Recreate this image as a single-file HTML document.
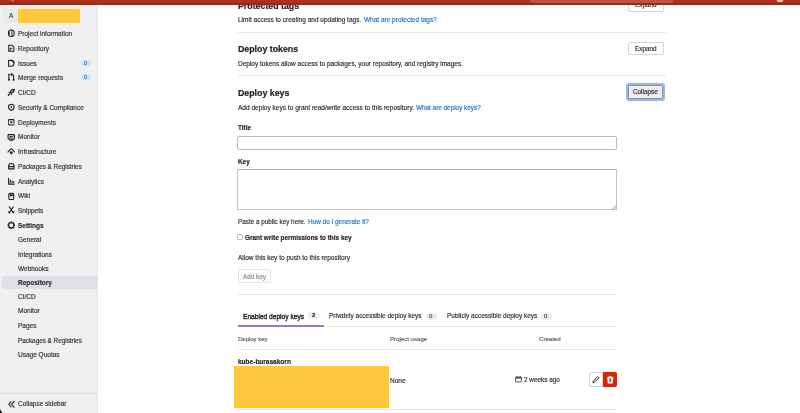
<!DOCTYPE html>
<html><head><meta charset="utf-8"><style>
html,body{margin:0;padding:0;}
body{width:800px;height:413px;overflow:hidden;position:relative;background:#fff;font-family:"Liberation Sans",sans-serif;}
.t{position:absolute;white-space:pre;line-height:1;will-change:transform;}
.r{position:absolute;}
</style></head><body>
<div class="t" style="left:238.00px;top:2.05px;font-size:8.8px;font-weight:700;color:#1f1e24;-webkit-text-stroke:0.2px currentColor;">Protected tags</div>
<div class="t" style="left:238.00px;top:17.20px;font-size:6.5px;font-weight:400;color:#2b2a30;-webkit-text-stroke:0.15px currentColor;">Limit access to creating and updating tags.</div>
<div class="t" style="left:364.00px;top:17.21px;font-size:6.49px;font-weight:400;color:#1f6fc5;-webkit-text-stroke:0.15px currentColor;">What are protected tags?</div>
<div class="r" style="left:627.50px;top:-1.80px;width:36.00px;height:13.40px;border:1px solid #d4d4d4;border-radius:2px;background:#fff;box-sizing:border-box"></div>
<div class="t" style="left:634.80px;top:2.22px;font-size:6.35px;font-weight:400;color:#2b2a30;-webkit-text-stroke:0.15px currentColor;">Expand</div>
<div class="r" style="left:238.00px;top:32.00px;width:428.00px;height:1.00px;background:#e9e9e9"></div>
<div class="t" style="left:238.00px;top:45.05px;font-size:8.8px;font-weight:700;color:#1f1e24;-webkit-text-stroke:0.2px currentColor;">Deploy tokens</div>
<div class="t" style="left:238.00px;top:61.00px;font-size:6.5px;font-weight:400;color:#2b2a30;-webkit-text-stroke:0.15px currentColor;">Deploy tokens allow access to packages, your repository, and registry images.</div>
<div class="r" style="left:628.00px;top:42.00px;width:36.00px;height:13.00px;border:1px solid #d4d4d4;border-radius:2px;background:#fff;box-sizing:border-box"></div>
<div class="t" style="left:634.80px;top:46.12px;font-size:6.35px;font-weight:400;color:#2b2a30;-webkit-text-stroke:0.15px currentColor;">Expand</div>
<div class="r" style="left:238.00px;top:75.00px;width:428.00px;height:1.00px;background:#e9e9e9"></div>
<div class="t" style="left:238.00px;top:88.65px;font-size:8.8px;font-weight:700;color:#1f1e24;-webkit-text-stroke:0.2px currentColor;">Deploy keys</div>
<div class="t" style="left:238.00px;top:104.56px;font-size:6.55px;font-weight:400;color:#2b2a30;-webkit-text-stroke:0.15px currentColor;">Add deploy keys to grant read/write access to this repository.</div>
<div class="t" style="left:416.20px;top:104.71px;font-size:6.37px;font-weight:400;color:#1f6fc5;-webkit-text-stroke:0.15px currentColor;">What are deploy keys?</div>
<div class="r" style="left:626.20px;top:83.00px;width:38.80px;height:17.60px;border-radius:3px;background:#93bdf2"></div>
<div class="r" style="left:628.10px;top:85.00px;width:35.00px;height:13.75px;background:#ececec;border:1px solid #8b8680;box-shadow:inset 0 0 0 1px #fafafa;border-radius:1.5px;box-sizing:border-box"></div>
<div class="t" style="left:633.10px;top:89.32px;font-size:6.35px;font-weight:400;color:#2b2a30;-webkit-text-stroke:0.15px currentColor;">Collapse</div>
<div class="t" style="left:238.00px;top:125.18px;font-size:6.4px;font-weight:700;color:#1f1e24;-webkit-text-stroke:0.16px currentColor;">Title</div>
<div class="r" style="left:237.30px;top:135.90px;width:379.70px;height:13.80px;border:1.1px solid #bdbdbd;border-radius:2px;background:#fff;box-sizing:border-box"></div>
<div class="t" style="left:238.00px;top:158.78px;font-size:6.4px;font-weight:700;color:#1f1e24;-webkit-text-stroke:0.16px currentColor;">Key</div>
<div class="r" style="left:237.20px;top:169.20px;width:379.80px;height:40.80px;border:1.2px solid #c4c4c4;border-top-color:#b4b4b4;border-radius:1px;background:#fff;box-sizing:border-box"></div>
<svg class="r" style="left:611px;top:204px" width="6" height="6" viewBox="0 0 6 6"><path d="M1 5.2 L5.2 1 M3 5.2 L5.2 3" stroke="#777" stroke-width="0.6"/></svg>
<div class="t" style="left:238.00px;top:219.44px;font-size:6.33px;font-weight:400;color:#2b2a30;-webkit-text-stroke:0.15px currentColor;">Paste a public key here.</div>
<div class="t" style="left:308.10px;top:219.37px;font-size:6.41px;font-weight:400;color:#1f6fc5;-webkit-text-stroke:0.15px currentColor;">How do I generate it?</div>
<div class="r" style="left:237.30px;top:234.30px;width:6.00px;height:6.00px;border:1px solid #b5b5b5;border-radius:1.2px;background:#fff;box-sizing:border-box"></div>
<div class="t" style="left:245.10px;top:235.28px;font-size:6.4px;font-weight:700;color:#1f1e24;-webkit-text-stroke:0.16px currentColor;">Grant write permissions to this key</div>
<div class="t" style="left:238.00px;top:254.80px;font-size:6.5px;font-weight:400;color:#2b2a30;-webkit-text-stroke:0.15px currentColor;">Allow this key to push to this repository</div>
<div class="r" style="left:238.00px;top:269.40px;width:33.20px;height:14.00px;border:1px solid #e6e6e6;border-radius:2px;background:#fafafa;box-sizing:border-box"></div>
<div class="t" style="left:243.00px;top:273.62px;font-size:6.35px;font-weight:400;color:#8c8c8c;-webkit-text-stroke:0.15px currentColor;">Add key</div>
<div class="r" style="left:238.00px;top:294.00px;width:379.00px;height:1.00px;background:#e9e9e9"></div>
<div class="t" style="left:243.20px;top:313.60px;font-size:6.61px;font-weight:400;color:#2b2a30;-webkit-text-stroke:0.15px currentColor;-webkit-text-stroke:0.38px currentColor">Enabled deploy keys</div>
<div class="r" style="left:308.00px;top:312.30px;width:11.20px;height:7.00px;background:#ececec;border-radius:3.5px"></div>
<div class="t" style="left:311.70px;top:313.21px;font-size:5.9px;font-weight:700;color:#222;-webkit-text-stroke:0.16px currentColor;">2</div>
<div class="t" style="left:329.40px;top:313.23px;font-size:6.46px;font-weight:400;color:#2b2a30;-webkit-text-stroke:0.15px currentColor;">Privately accessible deploy keys</div>
<div class="r" style="left:426.20px;top:312.50px;width:10.80px;height:7.00px;background:#ececec;border-radius:3.5px"></div>
<div class="t" style="left:429.10px;top:313.12px;font-size:6.0px;font-weight:400;color:#444;-webkit-text-stroke:0.15px currentColor;">0</div>
<div class="t" style="left:447.10px;top:313.22px;font-size:6.47px;font-weight:400;color:#2b2a30;-webkit-text-stroke:0.15px currentColor;">Publicly accessible deploy keys</div>
<div class="r" style="left:541.20px;top:312.50px;width:10.80px;height:7.00px;background:#ececec;border-radius:3.5px"></div>
<div class="t" style="left:544.10px;top:313.12px;font-size:6.0px;font-weight:400;color:#444;-webkit-text-stroke:0.15px currentColor;">0</div>
<div class="r" style="left:238.00px;top:326.00px;width:379.00px;height:1.00px;background:#e9e9e9"></div>
<div class="r" style="left:238.00px;top:324.90px;width:86.00px;height:2.10px;background:#8080cf"></div>
<div class="t" style="left:238.00px;top:336.04px;font-size:6.1px;font-weight:400;color:#5f5e64;-webkit-text-stroke:0.15px currentColor;letter-spacing:-0.07px">Deploy key</div>
<div class="t" style="left:389.60px;top:335.95px;font-size:6.2px;font-weight:400;color:#5f5e64;-webkit-text-stroke:0.15px currentColor;letter-spacing:-0.05px">Project usage</div>
<div class="t" style="left:538.60px;top:335.95px;font-size:6.2px;font-weight:400;color:#5f5e64;-webkit-text-stroke:0.15px currentColor;letter-spacing:-0.06px">Created</div>
<div class="r" style="left:238.00px;top:349.00px;width:379.00px;height:1.00px;background:#e9e9e9"></div>
<div class="t" style="left:238.00px;top:358.97px;font-size:6.53px;font-weight:700;color:#1f1e24;-webkit-text-stroke:0.16px currentColor;">kube-burasakorn</div>
<div class="r" style="left:233.50px;top:365.50px;width:155.30px;height:42.30px;background:#fec83e;border:0.8px solid #fcd20c;box-sizing:border-box"></div>
<div class="t" style="left:389.60px;top:378.10px;font-size:6.5px;font-weight:400;color:#2b2a30;-webkit-text-stroke:0.15px currentColor;">None</div>
<svg class="r" style="left:515.3px;top:376.2px" width="7" height="6.5" viewBox="0 0 7 6.5"><rect x="0.55" y="1.05" width="5.9" height="4.9" rx="0.7" fill="none" stroke="#4a4950" stroke-width="0.95"/><rect x="0.55" y="1.05" width="5.9" height="1.5" fill="#4a4950"/><line x1="1.9" y1="0" x2="1.9" y2="1.4" stroke="#4a4950" stroke-width="0.9"/><line x1="5.1" y1="0" x2="5.1" y2="1.4" stroke="#4a4950" stroke-width="0.9"/></svg>
<div class="t" style="left:524.40px;top:377.20px;font-size:6.38px;font-weight:400;color:#2b2a30;-webkit-text-stroke:0.15px currentColor;">2 weeks ago</div>
<div class="r" style="left:589.30px;top:372.00px;width:14.20px;height:14.60px;border:1px solid #d6d6d6;border-radius:2px 0 0 2px;background:#fff;box-sizing:border-box"></div>
<div class="r" style="left:602.80px;top:372.00px;width:14.20px;height:14.60px;background:#dd2306;border-radius:0 2px 2px 0"></div>
<svg class="r" style="left:592.2px;top:376.2px" width="7.5" height="7.5" viewBox="0 0 7.5 7.5"><path d="M0.9 6.6 L1.2 5.1 L5.3 1 Q5.9 0.5 6.5 1.1 Q7 1.7 6.5 2.3 L2.4 6.3 Z" fill="none" stroke="#2b2a30" stroke-width="1"/></svg>
<svg class="r" style="left:605.8px;top:375px" width="8.5" height="9.5" viewBox="0 0 8.5 9.5"><path d="M4.25 0.8 L7.4 2.6 L6.6 8.6 H1.9 L1.1 2.6 Z" fill="#fff"/><rect x="3.4" y="3.6" width="1.7" height="3.3" fill="#dd2306"/></svg>
<div class="r" style="left:238.00px;top:409.00px;width:379.00px;height:1.00px;background:#e9e9e9"></div>
<div class="r" style="left:0.00px;top:5.00px;width:98.00px;height:408.00px;background:#f0f0f0;border-right:1px solid #e6e6e6;box-sizing:border-box;border-top:0.8px solid #fff"></div>
<div class="r" style="left:0.00px;top:5.80px;width:97.00px;height:20.20px;background:#eeeff3"></div>
<div class="r" style="left:3.50px;top:8.90px;width:13.60px;height:13.60px;background:#e8eee9;border-radius:1.5px;border:0.5px solid #dfe5e1;box-sizing:border-box"></div>
<div class="t" style="left:8.50px;top:13.21px;font-size:6.6px;font-weight:400;color:#2a2a2a;-webkit-text-stroke:0.15px currentColor;-webkit-text-stroke:0.05px currentColor">A</div>
<div class="r" style="left:18.40px;top:8.80px;width:61.60px;height:14.00px;background:#fec83e;border:0.8px solid #fcd20c;box-sizing:border-box"></div>
<div class="t" style="left:17.80px;top:31.00px;font-size:6.5px;font-weight:400;color:#2e2d33;-webkit-text-stroke:0.15px currentColor;">Project information</div>
<div class="t" style="left:17.80px;top:46.10px;font-size:6.5px;font-weight:400;color:#2e2d33;-webkit-text-stroke:0.15px currentColor;">Repository</div>
<div class="t" style="left:17.80px;top:60.60px;font-size:6.5px;font-weight:400;color:#2e2d33;-webkit-text-stroke:0.15px currentColor;">Issues</div>
<div class="t" style="left:17.80px;top:75.20px;font-size:6.5px;font-weight:400;color:#2e2d33;-webkit-text-stroke:0.15px currentColor;">Merge requests</div>
<div class="t" style="left:17.80px;top:90.10px;font-size:6.5px;font-weight:400;color:#2e2d33;-webkit-text-stroke:0.15px currentColor;">CI/CD</div>
<div class="t" style="left:17.80px;top:105.00px;font-size:6.5px;font-weight:400;color:#2e2d33;-webkit-text-stroke:0.15px currentColor;">Security &amp; Compliance</div>
<div class="t" style="left:17.80px;top:119.60px;font-size:6.5px;font-weight:400;color:#2e2d33;-webkit-text-stroke:0.15px currentColor;">Deployments</div>
<div class="t" style="left:17.80px;top:134.30px;font-size:6.5px;font-weight:400;color:#2e2d33;-webkit-text-stroke:0.15px currentColor;">Monitor</div>
<div class="t" style="left:17.80px;top:149.20px;font-size:6.5px;font-weight:400;color:#2e2d33;-webkit-text-stroke:0.15px currentColor;">Infrastructure</div>
<div class="t" style="left:17.80px;top:164.22px;font-size:6.35px;font-weight:400;color:#2e2d33;-webkit-text-stroke:0.15px currentColor;">Packages &amp; Registries</div>
<div class="t" style="left:17.80px;top:178.70px;font-size:6.5px;font-weight:400;color:#2e2d33;-webkit-text-stroke:0.15px currentColor;">Analytics</div>
<div class="t" style="left:17.80px;top:193.40px;font-size:6.5px;font-weight:400;color:#2e2d33;-webkit-text-stroke:0.15px currentColor;">Wiki</div>
<div class="t" style="left:17.80px;top:208.10px;font-size:6.5px;font-weight:400;color:#2e2d33;-webkit-text-stroke:0.15px currentColor;">Snippets</div>
<div class="t" style="left:17.80px;top:222.90px;font-size:6.5px;font-weight:700;color:#2e2d33;-webkit-text-stroke:0.16px currentColor;">Settings</div>
<div class="r" style="left:80.50px;top:60.10px;width:10.60px;height:5.80px;background:#cbe2f9;border-radius:3px"></div>
<div class="t" style="left:84.30px;top:61.13px;font-size:5.4px;font-weight:400;color:#1f6fc5;-webkit-text-stroke:0.15px currentColor;">0</div>
<div class="r" style="left:80.50px;top:74.30px;width:10.60px;height:6.00px;background:#cbe2f9;border-radius:3px"></div>
<div class="t" style="left:84.30px;top:75.43px;font-size:5.4px;font-weight:400;color:#1f6fc5;-webkit-text-stroke:0.15px currentColor;">0</div>
<div class="r" style="left:2.00px;top:275.80px;width:94.50px;height:13.50px;background:#dfdfe5;border-radius:2px"></div>
<div class="t" style="left:17.80px;top:237.20px;font-size:6.5px;font-weight:400;color:#2e2d33;-webkit-text-stroke:0.15px currentColor;">General</div>
<div class="t" style="left:17.80px;top:251.60px;font-size:6.5px;font-weight:400;color:#2e2d33;-webkit-text-stroke:0.15px currentColor;">Integrations</div>
<div class="t" style="left:17.80px;top:265.70px;font-size:6.5px;font-weight:400;color:#2e2d33;-webkit-text-stroke:0.15px currentColor;">Webhooks</div>
<div class="t" style="left:17.80px;top:280.10px;font-size:6.5px;font-weight:700;color:#2e2d33;-webkit-text-stroke:0.16px currentColor;">Repository</div>
<div class="t" style="left:17.80px;top:294.20px;font-size:6.5px;font-weight:400;color:#2e2d33;-webkit-text-stroke:0.15px currentColor;">CI/CD</div>
<div class="t" style="left:17.80px;top:308.40px;font-size:6.5px;font-weight:400;color:#2e2d33;-webkit-text-stroke:0.15px currentColor;">Monitor</div>
<div class="t" style="left:17.80px;top:323.10px;font-size:6.5px;font-weight:400;color:#2e2d33;-webkit-text-stroke:0.15px currentColor;">Pages</div>
<div class="t" style="left:17.80px;top:337.62px;font-size:6.35px;font-weight:400;color:#2e2d33;-webkit-text-stroke:0.15px currentColor;">Packages &amp; Registries</div>
<div class="t" style="left:17.80px;top:352.00px;font-size:6.5px;font-weight:400;color:#2e2d33;-webkit-text-stroke:0.15px currentColor;">Usage Quotas</div>
<div class="r" style="left:0.00px;top:393.00px;width:98.00px;height:1.00px;background:#dcdcde"></div>
<div class="t" style="left:18.00px;top:401.10px;font-size:6.5px;font-weight:400;color:#2e2d33;-webkit-text-stroke:0.15px currentColor;">Collapse sidebar</div>
<svg class="r" style="left:6.70px;top:29.40px" width="8.6" height="8.6" viewBox="0 0 16 16"><path d="M5.6 2 H10.4 L13.2 4.6 V11.4 L10.4 14 H5.6 L2.8 11.4 V4.6 Z" stroke="#1f1e24" stroke-width="2" fill="none" stroke-linejoin="miter"/><path d="M9.2 2.4 V13.6" stroke="#1f1e24" stroke-width="1.8"/><path d="M3.6 4.8 V11.2" stroke="#1f1e24" stroke-width="2.6"/></svg>
<svg class="r" style="left:6.70px;top:44.30px" width="8.6" height="8.6" viewBox="0 0 16 16"><path d="M3.2 2.4 H9.6 L12.8 5.6 V13.6 H3.2 Z" stroke="#1f1e24" stroke-width="2.0" fill="none" stroke-linejoin="round" stroke-linecap="round"/><path d="M6.2 11 V8 H9.2" stroke="#1f1e24" stroke-width="2.0" fill="none" stroke-linejoin="round" stroke-linecap="round"/></svg>
<svg class="r" style="left:6.70px;top:58.50px" width="8.6" height="8.6" viewBox="0 0 16 16"><path d="M3 2.6 H8.2 Q13 2.6 13 8 Q13 13.4 8.2 13.4 H3 Z" stroke="#1f1e24" stroke-width="2.0" fill="none" stroke-linejoin="round" stroke-linecap="round"/><path d="M9.8 4.4 L13 6.4" stroke="#1f1e24" stroke-width="2.0" fill="none" stroke-linejoin="round" stroke-linecap="round"/></svg>
<svg class="r" style="left:6.70px;top:73.40px" width="8.6" height="8.6" viewBox="0 0 16 16"><path d="M3.6 3 V12.4" stroke="#1f1e24" stroke-width="2.0" fill="none" stroke-linejoin="round" stroke-linecap="round"/><circle cx="3.6" cy="12.6" r="1.9" fill="#1f1e24"/><circle cx="3.6" cy="2.8" r="1.6" fill="#1f1e24"/><path d="M8 2.9 H9.6 Q12.3 2.9 12.3 5.6 V12.4" stroke="#1f1e24" stroke-width="2.0" fill="none" stroke-linejoin="round" stroke-linecap="round"/><path d="M9.2 0.9 L7.2 2.9 L9.2 4.9" stroke="#1f1e24" stroke-width="2.0" fill="none" stroke-linejoin="round" stroke-linecap="round"/><circle cx="12.3" cy="12.6" r="1.9" fill="#1f1e24"/></svg>
<svg class="r" style="left:6.70px;top:88.30px" width="8.6" height="8.6" viewBox="0 0 16 16"><path d="M13.6 2.4 C10.4 2.4 7.2 4.6 6.2 7.8 L8.2 9.8 C11.4 8.8 13.6 5.6 13.6 2.4 Z" stroke="#1f1e24" stroke-width="2.0" fill="none" stroke-linejoin="round" stroke-linecap="round"/><circle cx="10.4" cy="5.6" r="0.9" fill="#1f1e24"/><path d="M6.2 7.8 L3.6 8 M8.2 9.8 L8 12.4" stroke="#1f1e24" stroke-width="2.0" fill="none" stroke-linejoin="round" stroke-linecap="round"/><path d="M4.8 11.2 L2.6 13.4" stroke="#1f1e24" stroke-width="2.4" stroke-linecap="round"/></svg>
<svg class="r" style="left:6.70px;top:103.20px" width="8.6" height="8.6" viewBox="0 0 16 16"><path d="M8 2.4 L13 4 V7.8 C13 10.8 10.8 12.8 8 13.8 C5.2 12.8 3 10.8 3 7.8 V4 Z" stroke="#1f1e24" stroke-width="2.0" fill="none" stroke-linejoin="round" stroke-linecap="round"/><circle cx="8" cy="6.8" r="1.4" fill="#1f1e24"/><path d="M8 6.8 V9.4" stroke="#1f1e24" stroke-width="1.8"/></svg>
<svg class="r" style="left:6.70px;top:117.80px" width="8.6" height="8.6" viewBox="0 0 16 16"><path d="M3 7 V4 Q3 3 4 3 H12 Q13 3 13 4 V9.5 M13 12 Q13 13 12 13 H4 Q3 13 3 12 V9.5" stroke="#1f1e24" stroke-width="2.0" fill="none" stroke-linejoin="round" stroke-linecap="round"/><rect x="6.2" y="6.2" width="3.6" height="3.6" fill="#1f1e24"/></svg>
<svg class="r" style="left:6.70px;top:132.50px" width="8.6" height="8.6" viewBox="0 0 16 16"><rect x="2" y="3" width="12" height="8.4" rx="1.6" stroke="#1f1e24" stroke-width="2.0" fill="none" stroke-linejoin="round" stroke-linecap="round"/><path d="M5.2 13.4 H10.8" stroke="#1f1e24" stroke-width="2.0" fill="none" stroke-linejoin="round" stroke-linecap="round"/><path d="M4.8 8 L6.6 6.4 L9 8 L11.2 6" stroke="#1f1e24" stroke-width="2.0" fill="none" stroke-linejoin="round" stroke-linecap="round"/></svg>
<svg class="r" style="left:6.70px;top:147.10px" width="8.6" height="8.6" viewBox="0 0 16 16"><path d="M1.8 9.4 L6.6 4 Q8 2.6 9.4 4 L14.2 9.4" stroke="#1f1e24" stroke-width="2.0" fill="none" stroke-linejoin="round" stroke-linecap="round"/><circle cx="8" cy="10.8" r="2.7" fill="#1f1e24"/></svg>
<svg class="r" style="left:6.70px;top:162.30px" width="8.6" height="8.6" viewBox="0 0 16 16"><path d="M3 13 V7.6 Q3 2.8 8 2.8 Q13 2.8 13 7.6 V13 Z" stroke="#1f1e24" stroke-width="2.0" fill="none" stroke-linejoin="round" stroke-linecap="round"/><path d="M3.2 8.4 H12.8" stroke="#1f1e24" stroke-width="2.0" fill="none" stroke-linejoin="round" stroke-linecap="round"/><path d="M3.6 11.6 H12.4" stroke="#1f1e24" stroke-width="1.4"/></svg>
<svg class="r" style="left:6.70px;top:176.90px" width="8.6" height="8.6" viewBox="0 0 16 16"><path d="M3 2.2 V13.2 H13.6" stroke="#1f1e24" stroke-width="2.0" fill="none" stroke-linejoin="round" stroke-linecap="round"/><path d="M6.2 10.4 V5.6 M9.4 10.4 V7.4 M12.4 10.4 V8.6" stroke="#1f1e24" stroke-width="2.0" fill="none" stroke-linejoin="round" stroke-linecap="round"/></svg>
<svg class="r" style="left:6.70px;top:191.60px" width="8.6" height="8.6" viewBox="0 0 16 16"><rect x="3.4" y="2.4" width="9.2" height="11.4" rx="1.8" stroke="#1f1e24" stroke-width="2.0" fill="none" stroke-linejoin="round" stroke-linecap="round"/><path d="M6.2 3 V7.2 L8 5.8 L9.8 7.2 V3" stroke="#1f1e24" stroke-width="2.0" fill="none" stroke-linejoin="round" stroke-linecap="round"/></svg>
<svg class="r" style="left:6.70px;top:206.30px" width="8.6" height="8.6" viewBox="0 0 16 16"><path d="M4.2 1.6 L10.6 10.6 M11.8 1.6 L5.4 10.6" stroke="#1f1e24" stroke-width="2.0" fill="none" stroke-linejoin="round" stroke-linecap="round"/><circle cx="4.2" cy="11.8" r="2.1" fill="#1f1e24"/><circle cx="11.8" cy="11.8" r="2.1" fill="#1f1e24"/></svg>
<svg class="r" style="left:6.60px;top:221.20px" width="8.6" height="8.6" viewBox="0 0 16 16"><path d="M6.57 0.94 L9.43 0.94 L9.97 2.76 L10.31 2.90 L11.98 2.00 L14.00 4.02 L13.10 5.69 L13.24 6.03 L15.06 6.57 L15.06 9.43 L13.24 9.97 L13.10 10.31 L14.00 11.98 L11.98 14.00 L10.31 13.10 L9.97 13.24 L9.43 15.06 L6.57 15.06 L6.03 13.24 L5.69 13.10 L4.02 14.00 L2.00 11.98 L2.90 10.31 L2.76 9.97 L0.94 9.43 L0.94 6.57 L2.76 6.03 L2.90 5.69 L2.00 4.02 L4.02 2.00 L5.69 2.90 L6.03 2.76 Z M8 4.2 A3.8 3.8 0 1 0 8 11.8 A3.8 3.8 0 1 0 8 4.2 Z" fill-rule="evenodd" fill="#1f1e24"/></svg>
<svg class="r" style="left:6.70px;top:399.80px" width="8.6" height="8.6" viewBox="0 0 16 16"><path d="M8 2.4 L3.4 8 L8 13.6" stroke="#3a3940" stroke-width="2.2" fill="none"/><path d="M13.2 2.4 L8.6 8 L13.2 13.6" stroke="#1f1e24" stroke-width="2.0" fill="none" stroke-linejoin="round" stroke-linecap="round"/></svg>
<div class="r" style="left:0.00px;top:0.00px;width:800.00px;height:4.70px;background:linear-gradient(#a93320 0, #a93320 2.3px, #a52714 3.2px, #a22210 4.7px)"></div>
<div class="r" style="left:530.00px;top:0.00px;width:142.60px;height:2.80px;background:#b95546;border-radius:0 0 2px 2px"></div>
<div class="r" style="left:776.80px;top:-2.50px;width:6.60px;height:4.00px;background:#e6d3d0;border-radius:50%;box-shadow:0 0 0 0.6px #b65a4c"></div>
<div class="r" style="left:10.50px;top:-1.00px;width:3.50px;height:2.20px;background:#f3812f;border-radius:50%"></div>
<svg class="r" style="left:0;top:408px" width="5" height="5" viewBox="0 0 5 5"><path d="M0 0.6 C0.5 2.6 1.4 4 2.6 5 H0 Z" fill="#111"/></svg>
</body></html>
